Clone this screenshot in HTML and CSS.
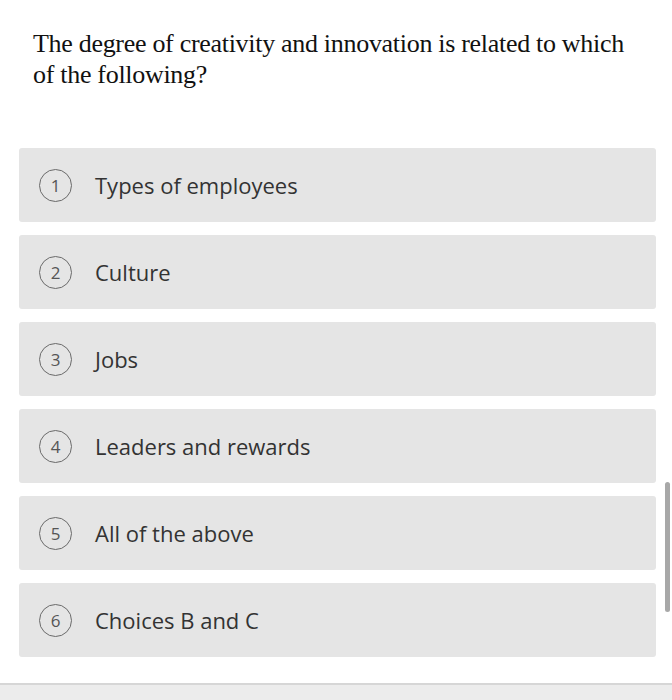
FILE: index.html
```html
<!DOCTYPE html>
<html>
<head>
<meta charset="utf-8">
<link rel="stylesheet" href="styles.css">
</head>
<body>
<div class="page">
  <h1 class="question">The degree of creativity and innovation is related to which of the following?</h1>
  <div class="options">
    <div class="option"><span class="num">1</span><span class="label">Types of employees</span></div>
    <div class="option"><span class="num">2</span><span class="label">Culture</span></div>
    <div class="option"><span class="num">3</span><span class="label">Jobs</span></div>
    <div class="option"><span class="num">4</span><span class="label">Leaders and rewards</span></div>
    <div class="option"><span class="num">5</span><span class="label">All of the above</span></div>
    <div class="option"><span class="num">6</span><span class="label">Choices B and C</span></div>
  </div>
</div>
<div class="scrollbar"></div>
<div class="bottombar"></div>
</body>
</html>
```

FILE: styles.css
```css
html, body {
  margin: 0;
  padding: 0;
  background: #fff;
  height: 700px;
  overflow: hidden;
}
.page {
  padding: 28px 16px 0 19px;
}
.question {
  margin: 0 0 0 14px;
  font-family: "Liberation Serif", serif;
  font-weight: normal;
  font-size: 26px;
  letter-spacing: -0.3px;
  line-height: 31px;
  color: #111;
  width: 615px;
}
.options {
  margin-top: 58px;
  display: flex;
  flex-direction: column;
  gap: 13px;
  width: 637px;
}
.option {
  height: 74px;
  background: #e5e5e5;
  border-radius: 3px;
  display: flex;
  align-items: center;
  padding-left: 20px;
  font-family: "Open Sans", sans-serif;
}
.num {
  width: 31px;
  height: 31px;
  border: 1.5px solid #6a6a6a;
  border-radius: 50%;
  display: flex;
  align-items: center;
  justify-content: center;
  font-size: 17px;
  color: #555;
  box-sizing: content-box;
  flex-shrink: 0;
}
.label {
  margin-left: 23px;
  font-size: 22px;
  color: #333;
}
.scrollbar {
  position: absolute;
  left: 665px;
  top: 482px;
  width: 5px;
  height: 130px;
  border-radius: 3px;
  background: #a8a8a8;
}
.bottombar {
  position: absolute;
  left: 0;
  top: 683px;
  width: 672px;
  height: 17px;
  background: #ececec;
  border-top: 2px solid #d6d6d6;
}
```
